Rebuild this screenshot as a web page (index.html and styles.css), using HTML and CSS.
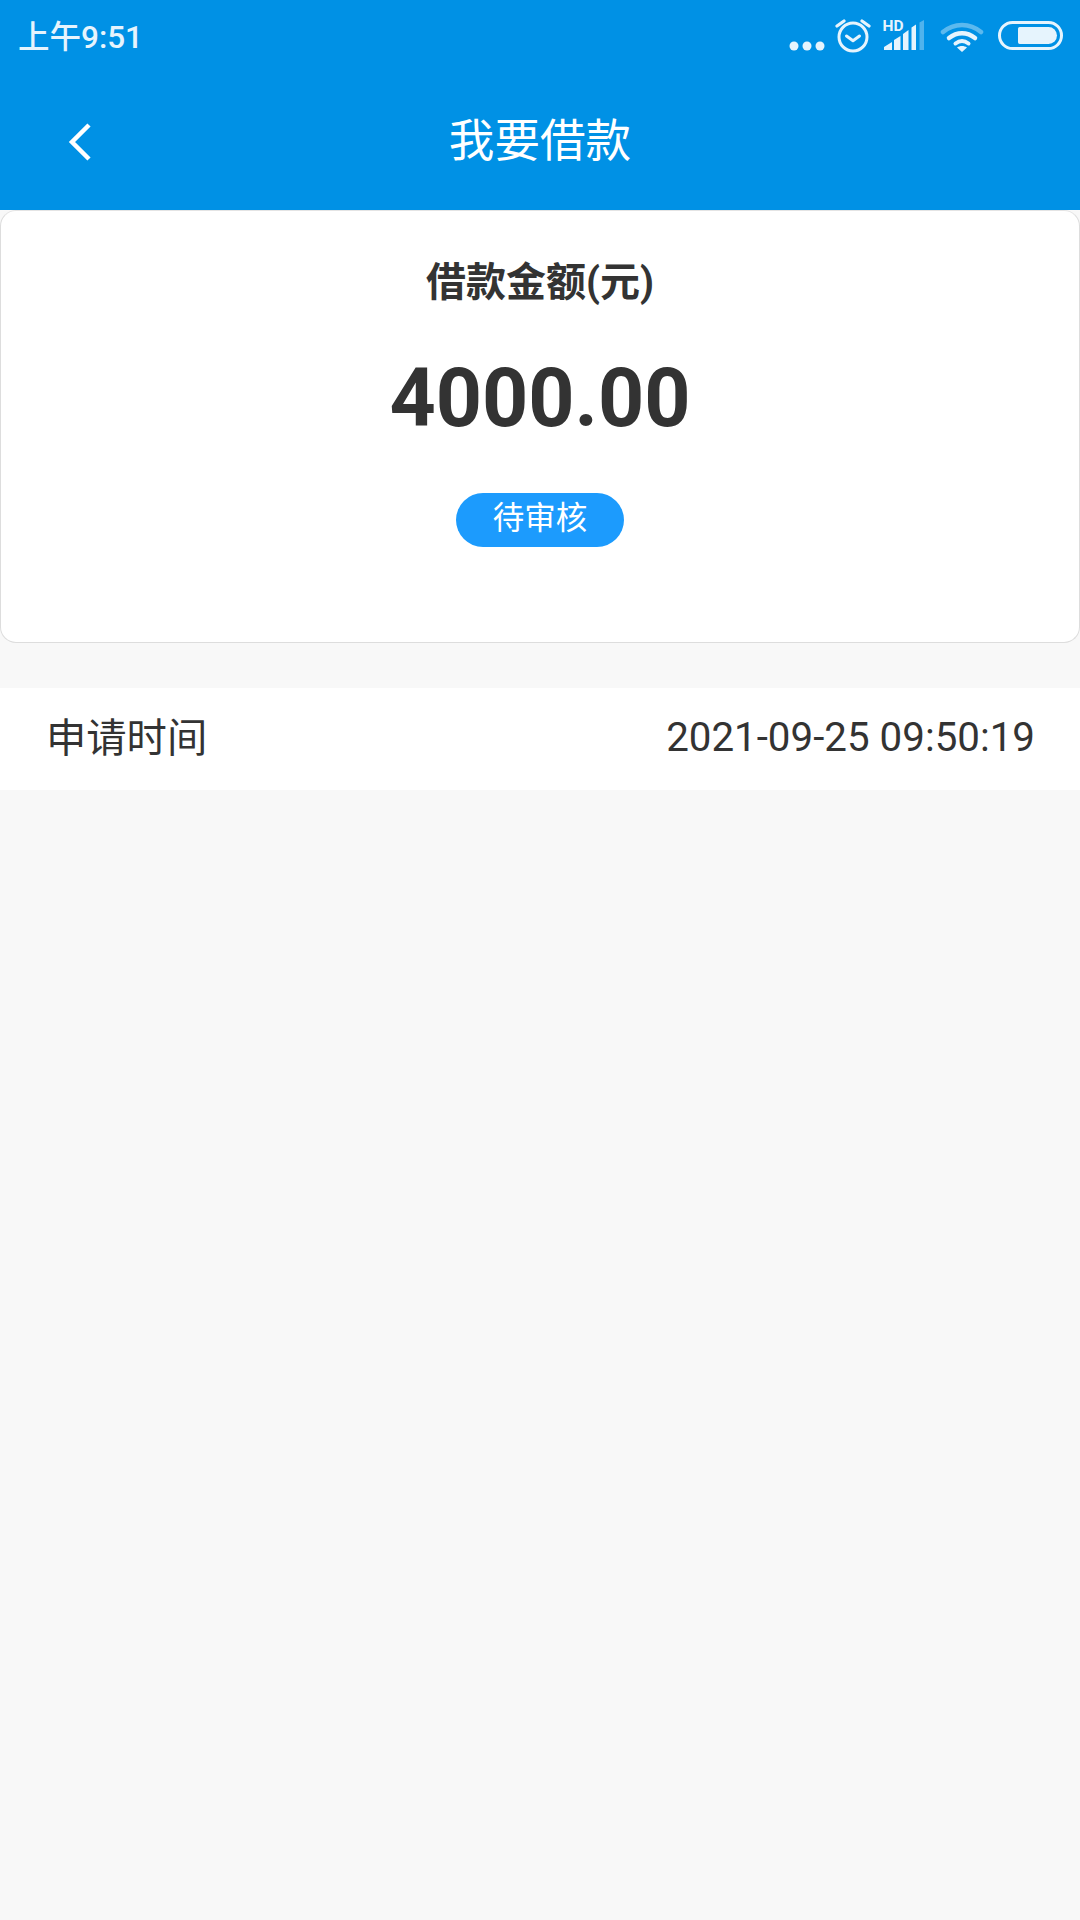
FILE: index.html
```html
<!DOCTYPE html>
<html lang="zh-CN">
<head>
<meta charset="utf-8">
<title>我要借款</title>
<link rel="stylesheet" href="styles.css">
</head>
<body>
<header class="app-header">
  <div class="status-bar">
    <span class="clock">上午9:51</span>
    <div class="status-icons">
      <svg class="ic-dots" width="36" height="12" viewBox="0 0 36 12"><circle cx="5" cy="6" r="4.500" fill="#e6f4fd"/><circle cx="18" cy="6" r="4.500" fill="#e6f4fd"/><circle cx="31" cy="6" r="4.500" fill="#e6f4fd"/></svg>
      <svg class="ic-alarm" width="36" height="36" viewBox="0 0 36 36" fill="none" stroke="#e6f4fd" stroke-width="3"><circle cx="18" cy="19" r="14"/><path d="M11.500 18l6.500 4.700 6.500-4.700" stroke-linecap="round" stroke-linejoin="round"/><path d="M2 8l7-5M34 8l-7-5" stroke-linecap="round" stroke-width="3.200"/></svg>
      <svg class="ic-signal" width="42" height="32" viewBox="0 0 42 32"><text x="-0.5" y="12" class="hd">HD</text><path d="M1 31v-3l8-5v8zM11 31V21l6.500-4v14zM20 31V15l5.500-4v20zM28.500 31V8.500l4.500-3V31z" fill="#e6f4fd"/><path d="M36.500 31V3.500L41 1v30z" fill="#e6f4fd" opacity=".35"/></svg>
      <svg class="ic-wifi" width="44" height="32" viewBox="0 0 44 32" fill="none" stroke-linecap="round"><path d="M3 11C14 1.500 30 1.500 41 11" stroke="#e6f4fd" stroke-opacity=".4" stroke-width="4.500"/><path d="M9 17c8-6.500 18-6.500 26 0" stroke="#e6f4fd" stroke-width="4.500"/><path d="M15.500 22.500c4-3 9-3 13 0" stroke="#e6f4fd" stroke-width="4"/><path d="M22 31l-5-4.500c3-2 7-2 10 0z" fill="#e6f4fd"/></svg>
      <div class="battery"><div class="battery-fill"></div></div>
    </div>
  </div>
  <div class="nav-bar">
    <svg class="back" width="26" height="38" viewBox="0 0 26 38" fill="none" stroke="#fff" stroke-width="4.500"><path d="M22 2L5 19l17 17"/></svg>
    <h1 class="nav-title">我要借款</h1>
  </div>
</header>
<section class="amount-card">
  <h2 class="amount-label">借款金额(元)</h2>
  <div class="amount-value">4000.00</div>
  <span class="status-pill">待审核</span>
</section>
<div class="info-row">
  <span class="info-key">申请时间</span>
  <span class="info-value">2021-09-25 09:50:19</span>
</div>
</body>
</html>
```
FILE: styles.css
```css
* { box-sizing: border-box; }
html, body { margin: 0; padding: 0; }
body {
  width: 1080px;
  min-height: 1920px;
  background: #f8f8f8;
  color: #333;
  font-family: Roboto, "Noto Sans CJK SC", sans-serif;
}
.app-header { height: 210px; background: #0091e5; color: #fff; }
.status-bar {
  height: 70px;
  padding: 0 17px 0 18px;
  display: flex;
  align-items: center;
  justify-content: space-between;
}
.clock { font-size: 31.5px; font-weight: 500; color: #e6f4fd; line-height: 1; margin-top: 6px; }
.status-icons { display: flex; align-items: center; }
.ic-dots { margin-top: 21px; margin-right: 10px; }
.ic-alarm { margin-top: 2px; margin-right: 12px; }
.ic-signal { margin-right: 15px; overflow: visible; }
.hd { font: 700 15.5px Roboto, sans-serif; fill: #e6f4fd; }
.ic-wifi { margin-top: 3px; margin-right: 14px; }
.battery {
  width: 65px;
  height: 29px;
  border: 3px solid #e6f4fd;
  border-radius: 15px;
  padding: 3px;
  display: flex;
  justify-content: flex-end;
}
.battery-fill { width: 39px; background: #e6f4fd; border-radius: 2px 10px 10px 2px; }
.nav-bar {
  height: 140px;
  position: relative;
  display: flex;
  align-items: center;
  justify-content: center;
  padding-top: 3px;
}
.back { position: absolute; left: 67px; top: 53px; }
.nav-title { margin: 0; font-size: 45.6px; font-weight: 400; line-height: 1; }
.amount-card {
  height: 433px;
  background: #fff;
  border: 1px solid #ddd;
  border-top-color: #e4e4e4;
  border-radius: 16px;
  display: flex;
  flex-direction: column;
  align-items: center;
  padding-top: 48px;
}
.amount-label { margin: 0; font-size: 40px; font-weight: 700; line-height: 48px; }
.amount-value { margin-top: 44px; font-size: 80.7px; font-weight: 700; line-height: 96px; }
.status-pill {
  margin-top: 46px;
  width: 168px;
  height: 54px;
  border-radius: 27px;
  background: #1c9bfd;
  color: #fff;
  font-size: 31.5px;
  line-height: 52px;
  text-align: center;
}
.info-row {
  margin-top: 45px;
  height: 102px;
  background: #fff;
  padding: 0 45px 0 46px;
  display: flex;
  align-items: center;
  justify-content: space-between;
  font-size: 40.3px;
}
.info-key { padding-bottom: 9px; }
.info-value { padding-bottom: 3px; }
```
